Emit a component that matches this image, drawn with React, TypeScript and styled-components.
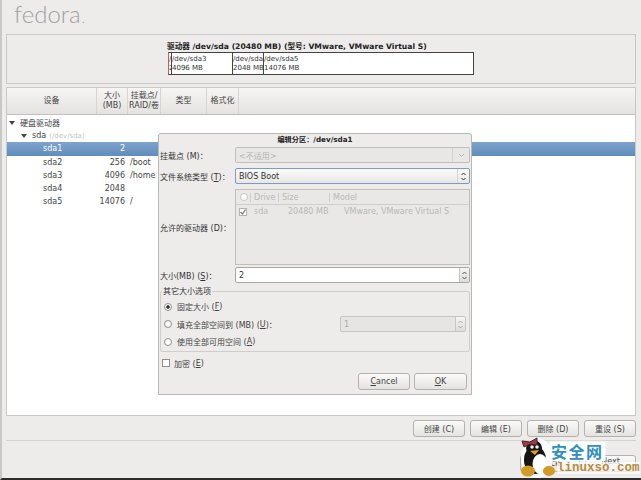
import React from 'react';
import styled, { createGlobalStyle } from 'styled-components';

const GlobalStyle = createGlobalStyle`
  html, body {
    margin: 0;
    padding: 0;
    background: #edeceb;
  }
`;

const Screen = styled.div`
  position: relative;
  width: 641px;
  height: 480px;
  overflow: hidden;
  display: flex;
  flex-direction: column;
  box-sizing: border-box;
  padding: 0 5px 0 4px;
  background: #edeceb;
  color: #3a3a3a;
  font-family: 'Liberation Sans', 'DejaVu Sans', 'Noto Sans CJK SC', sans-serif;
  font-size: 9px;
  border-left: 2px solid #c9c8c4;
  border-bottom: 2px solid #2c2c2c;
`;

const Logo = styled.div`
  height: 34px;
  box-sizing: border-box;
  padding: 0 0 0 8px;
  font-family: 'Lato', 'Open Sans', sans-serif;
  font-size: 24px;
  font-weight: 300;
  line-height: 28px;
  color: #a0a0a0;
  span {
    font-size: 14px;
    margin-left: 1px;
  }
`;

const DiskPanel = styled.section`
  height: 50px;
  box-sizing: border-box;
  border: 1px solid #c9c8c5;
  display: flex;
  flex-direction: column;
  align-items: flex-start;
  padding: 7px 0 0 160px;
`;

const DiskTitle = styled.div`
  font-family: 'DejaVu Sans', 'Noto Sans CJK SC', sans-serif;
  font-size: 7.65px;
  font-weight: 700;
  line-height: 10px;
  color: #222;
  white-space: nowrap;
`;

const DiskBar = styled.div`
  display: flex;
  width: 306px;
  height: 23px;
  margin-left: 1px;
  box-sizing: border-box;
  border: 1px solid #444;
  border-left-color: #c85a5a;
  background: #fff;
`;

const DiskSlot = styled.div<{ $w: number }>`
  width: ${(p) => p.$w}px;
  flex: none;
  box-sizing: border-box;
  overflow: hidden;
  border-right: 1px solid #444;
  font-family: 'DejaVu Sans', sans-serif;
  font-size: 7px;
  line-height: 9px;
  padding-top: 2px;
  white-space: nowrap;
  color: #333;
  &:last-child {
    border-right: none;
  }
`;

const TreePanel = styled.section`
  margin-top: 3px;
  height: 329px;
  box-sizing: border-box;
  border: 1px solid #c9c8c5;
  background: #fff;
`;

const TreeHead = styled.div`
  display: flex;
  height: 26px;
  margin-bottom: 1px;
  border-bottom: 1px solid #c2c1bd;
  background: linear-gradient(#f6f5f4, #e4e3e0);
`;

const HeadCell = styled.div<{ $w: number }>`
  width: ${(p) => p.$w}px;
  flex: none;
  box-sizing: border-box;
  display: flex;
  align-items: center;
  justify-content: center;
  text-align: center;
  white-space: nowrap;
  line-height: 10px;
  font-family: 'DejaVu Sans', 'Noto Sans CJK SC', sans-serif;
  font-size: 8px;
  border-right: 1px solid #d6d5d2;
  color: #444;
`;

const TreeRow = styled.div<{ $selected?: boolean; $indent: number }>`
  display: flex;
  align-items: center;
  height: 13.2px;
  padding-left: ${(p) => p.$indent}px;
  font-family: 'DejaVu Sans', 'Noto Sans CJK SC', sans-serif;
  font-size: 8px;
  white-space: nowrap;
  background: ${(p) => (p.$selected ? 'linear-gradient(#7fa3cc, #5f8dbd)' : 'transparent')};
  color: ${(p) => (p.$selected ? '#fff' : '#444')};
`;

const Arrow = styled.i`
  width: 0;
  height: 0;
  margin-right: 5px;
  border-left: 3.5px solid transparent;
  border-right: 3.5px solid transparent;
  border-top: 4px solid #444;
`;

const Muted = styled.span`
  margin-left: 3px;
  color: #c4c4c4;
  font-size: 7px;
`;

const DevCell = styled.span`
  width: 46px;
`;

const SizeCell = styled.span`
  width: 36px;
  text-align: right;
`;

const MountCell = styled.span`
  margin-left: 5px;
`;

const ActionBar = styled.div`
  display: flex;
  justify-content: flex-end;
  gap: 5px;
  padding: 4px 0 0;
  height: 25px;
  box-sizing: border-box;
  border-bottom: 1px solid #d4d3d0;
`;

const Button = styled.button<{ $w: number; $lift?: boolean }>`
  width: ${(p) => p.$w}px;
  height: 17px;
  padding: 0 0 ${(p) => (p.$lift ? 4 : 0)}px;
  box-sizing: border-box;
  border: 1px solid #b3b2ae;
  border-radius: 3px;
  background: linear-gradient(#fafaf9, #e4e3e0);
  font-family: 'DejaVu Sans', 'Noto Sans CJK SC', sans-serif;
  font-size: 8px;
  color: #444;
`;

const Footer = styled.div`
  display: flex;
  justify-content: flex-end;
  gap: 5px;
  padding-top: 14px;
`;

const Dialog = styled.div`
  position: absolute;
  left: 156px;
  top: 133px;
  width: 314px;
  height: 262px;
  box-sizing: border-box;
  border: 1px solid #b9b8b4;
  border-radius: 3px 3px 0 0;
  background: #edeceb;
  padding: 0 1px;
  font-family: 'DejaVu Sans', 'Noto Sans CJK SC', sans-serif;
  font-size: 8px;
  color: #444;
`;

const DialogTitle = styled.div`
  height: 13px;
  line-height: 12px;
  text-align: center;
  font-weight: 700;
  font-size: 7.2px;
  color: #222;
`;

const FormRow = styled.div<{ $h: number }>`
  display: flex;
  align-items: center;
  height: ${(p) => p.$h}px;
`;

const FormLabel = styled.div`
  width: 75px;
  flex: none;
  white-space: nowrap;
  color: #333;
`;

const Combo = styled.div<{ $disabled?: boolean; $focus?: boolean }>`
  flex: 1;
  height: 16px;
  box-sizing: border-box;
  display: flex;
  align-items: center;
  justify-content: space-between;
  padding: 0 0 0 3px;
  border: 1px solid ${(p) => (p.$focus ? '#7b9cc4' : '#c0bfbb')};
  border-radius: 2px;
  background: ${(p) => (p.$disabled ? '#e8e7e5' : 'linear-gradient(#fbfbfa, #e8e7e4)')};
  color: ${(p) => (p.$disabled ? '#b4b4b2' : '#333')};
`;

const ComboSide = styled.span<{ $w: number }>`
  width: ${(p) => p.$w}px;
  height: 100%;
  display: flex;
  align-items: center;
  justify-content: center;
  border-left: 1px solid #d4d3d0;
`;

const DriveTable = styled.div`
  flex: 1;
  height: 76px;
  box-sizing: border-box;
  border: 1px solid #c0bfbb;
  background: #e9e8e6;
  color: #b8b8b6;
`;

const DriveHead = styled.div`
  display: flex;
  align-items: center;
  height: 14px;
  border-bottom: 1px solid #cfcecb;
  padding-left: 4px;
`;

const DriveHeadCell = styled.span<{ $w: number }>`
  width: ${(p) => p.$w}px;
  flex: none;
  box-sizing: border-box;
  padding-left: 3px;
  border-left: 1px solid #cfcecb;
  white-space: nowrap;
`;

const DriveCol = styled.span<{ $w: number }>`
  width: ${(p) => p.$w}px;
  flex: none;
  white-space: nowrap;
`;

const DriveLine = styled.div`
  display: flex;
  align-items: center;
  height: 13px;
  padding-left: 3px;
`;

const RadioMark = styled.span<{ $on?: boolean; $dim?: boolean }>`
  width: 8px;
  height: 8px;
  box-sizing: border-box;
  flex: none;
  border-radius: 50%;
  border: 1px solid ${(p) => (p.$dim ? '#c4c4c2' : '#8e8d89')};
  background: ${(p) => (p.$on ? 'radial-gradient(#333 35%, #fff 45%)' : '#fff')};
  margin-right: ${(p) => (p.$dim ? 2 : 5)}px;
`;

const CheckMark = styled.span<{ $dim?: boolean }>`
  width: 8px;
  height: 8px;
  box-sizing: border-box;
  flex: none;
  border: 1px solid ${(p) => (p.$dim ? '#b4b4b2' : '#8e8d89')};
  background: #fff;
  margin-right: ${(p) => (p.$dim ? 7 : 4)}px;
  display: flex;
  align-items: center;
  justify-content: center;
`;

const Spin = styled.div<{ $w?: number; $disabled?: boolean }>`
  flex: ${(p) => (p.$w ? 'none' : '1')};
  width: ${(p) => (p.$w ? `${p.$w}px` : 'auto')};
  height: 16px;
  box-sizing: border-box;
  display: flex;
  align-items: center;
  justify-content: space-between;
  padding-left: 3px;
  border: 1px solid ${(p) => (p.$disabled ? '#c6c5c2' : '#a8a7a3')};
  border-radius: 2px;
  background: ${(p) => (p.$disabled ? '#e6e5e3' : '#fff')};
  color: ${(p) => (p.$disabled ? '#aaa' : '#333')};
`;

const SpinSide = styled.span`
  width: 9px;
  height: 100%;
  display: flex;
  align-items: center;
  justify-content: center;
  background: linear-gradient(#f5f4f3, #dddcd9);
  border-left: 1px solid #c6c5c2;
`;

const OptionGroup = styled.fieldset`
  margin: 2px 0 0;
  padding: 2px 3px 0 3px;
  height: 65px;
  box-sizing: border-box;
  border: 1px solid #cfcecb;
  border-radius: 2px;
`;

const GroupLegend = styled.legend`
  padding: 0 1px;
  margin-left: -2px;
  font-size: 8px;
  line-height: 9px;
  color: #333;
`;

const OptionRow = styled.div`
  display: flex;
  align-items: center;
  height: 17.5px;
  color: #444;
`;

const OptionFill = styled.span`
  flex: 1;
`;

const EncryptRow = styled.div`
  display: flex;
  align-items: center;
  height: 20px;
  margin-top: 1px;
  padding-left: 2px;
`;

const DialogActions = styled.div`
  display: flex;
  justify-content: flex-end;
  gap: 4px;
  padding-right: 3px;
`;

const Watermark = styled.div`
  position: absolute;
  left: 518px;
  top: 435px;
  width: 121px;
  height: 43px;
`;

const Penguin = styled.svg`
  position: absolute;
  left: 0;
  top: 0;
`;

const WaterTitle = styled.div`
  position: absolute;
  left: 30px;
  top: 7px;
  height: 19px;
  padding: 0 1px;
  background: #fff;
  box-shadow: 0 0 3px #fff;
  font-family: 'Noto Sans CJK SC', sans-serif;
  font-size: 16px;
  line-height: 19px;
  font-weight: 700;
  letter-spacing: 1.5px;
  color: #2e8fc2;
  white-space: nowrap;
`;

const WaterSite = styled.div`
  position: absolute;
  left: 37px;
  top: 27px;
  height: 12px;
  background: rgba(255, 255, 255, 0.7);
  font-family: 'Liberation Mono', monospace;
  font-size: 12.5px;
  line-height: 12px;
  font-weight: 700;
  color: #b98a3e;
  white-space: nowrap;
`;

const partitions = [
  { name: 'sda1', size: '2', mount: '', selected: true },
  { name: 'sda2', size: '256', mount: '/boot' },
  { name: 'sda3', size: '4096', mount: '/home' },
  { name: 'sda4', size: '2048', mount: '' },
  { name: 'sda5', size: '14076', mount: '/' },
];

const UpDown = ({ color = '#555' }: { color?: string }) => (
  <svg width="7" height="11" viewBox="0 0 7 11">
    <path d="M1.5 4 3.5 2 5.5 4M1.5 7 3.5 9 5.5 7" fill="none" stroke={color} strokeWidth="1" />
  </svg>
);

export default function App() {
  return (
    <Screen>
      <GlobalStyle />
      <Logo>
        fedora<span>.</span>
      </Logo>
      <DiskPanel>
        <DiskTitle>驱动器 /dev/sda (20480 MB) (型号: VMware, VMware Virtual S)</DiskTitle>
        <DiskBar>
          <DiskSlot $w={3}>
            /<br />2
          </DiskSlot>
          <DiskSlot $w={61}>
            /dev/sda3<br />4096 MB
          </DiskSlot>
          <DiskSlot $w={31}>
            /dev/sda4<br />2048 MB
          </DiskSlot>
          <DiskSlot $w={209}>
            /dev/sda5<br />14076 MB
          </DiskSlot>
        </DiskBar>
      </DiskPanel>
      <TreePanel>
        <TreeHead>
          <HeadCell $w={90}>设备</HeadCell>
          <HeadCell $w={31}>大小<br />(MB)</HeadCell>
          <HeadCell $w={33}>挂载点/<br />RAID/卷</HeadCell>
          <HeadCell $w={46}>类型</HeadCell>
          <HeadCell $w={32}>格式化</HeadCell>
        </TreeHead>
        <TreeRow $indent={2}>
          <Arrow />硬盘驱动器
        </TreeRow>
        <TreeRow $indent={14}>
          <Arrow />sda<Muted>(/dev/sda)</Muted>
        </TreeRow>
        {partitions.map((row) => (
          <TreeRow key={row.name} $indent={36} $selected={row.selected}>
            <DevCell>{row.name}</DevCell>
            <SizeCell>{row.size}</SizeCell>
            <MountCell>{row.mount}</MountCell>
          </TreeRow>
        ))}
      </TreePanel>
      <ActionBar>
        <Button $w={52}>创建 (C)</Button>
        <Button $w={52}>编辑 (E)</Button>
        <Button $w={52}>删除 (D)</Button>
        <Button $w={52}>重设 (S)</Button>
      </ActionBar>
      <Footer>
        <Button $w={60}>Back</Button>
        <Button $w={51} $lift>Next</Button>
      </Footer>

      <Dialog>
        <DialogTitle>编辑分区：/dev/sda1</DialogTitle>
        <FormRow $h={16}>
          <FormLabel>挂载点 (M)：</FormLabel>
          <Combo $disabled>
            &lt;不适用&gt;
            <ComboSide $w={16}>
              <svg width="7" height="5" viewBox="0 0 7 5">
                <path d="M1 1 3.5 3.5 6 1" fill="none" stroke="#b5b5b3" />
              </svg>
            </ComboSide>
          </Combo>
        </FormRow>
        <FormRow $h={26}>
          <FormLabel>文件系统类型 (<u>T</u>)：</FormLabel>
          <Combo $focus>
            BIOS Boot
            <ComboSide $w={11}>
              <UpDown color="#333" />
            </ComboSide>
          </Combo>
        </FormRow>
        <FormRow $h={76}>
          <FormLabel>允许的驱动器 (D)：</FormLabel>
          <DriveTable>
            <DriveHead>
              <RadioMark $dim />
              <DriveHeadCell $w={28}>Drive</DriveHeadCell>
              <DriveHeadCell $w={51}>Size</DriveHeadCell>
              <DriveHeadCell $w={30}>Model</DriveHeadCell>
            </DriveHead>
            <DriveLine>
              <CheckMark $dim>
                <svg width="6" height="6" viewBox="0 0 6 6">
                  <path d="M0.5 3 2.5 5 5.5 0.5" fill="none" stroke="#777" strokeWidth="1.2" />
                </svg>
              </CheckMark>
              <DriveCol $w={34}>sda</DriveCol>
              <DriveCol $w={56}>20480 MB</DriveCol>
              <DriveCol $w={100}>VMware, VMware Virtual S</DriveCol>
            </DriveLine>
          </DriveTable>
        </FormRow>
        <FormRow $h={20}>
          <FormLabel>大小(MB) (<u>S</u>)：</FormLabel>
          <Spin>
            2
            <SpinSide>
              <UpDown />
            </SpinSide>
          </Spin>
        </FormRow>
        <OptionGroup>
          <GroupLegend>其它大小选项</GroupLegend>
          <OptionRow>
            <RadioMark $on />固定大小 (<u>F</u>)
          </OptionRow>
          <OptionRow>
            <RadioMark />填充全部空间到 (MB) (<u>U</u>)：
            <OptionFill />
            <Spin $w={126} $disabled>
              1
              <SpinSide>
                <UpDown color="#aaa" />
              </SpinSide>
            </Spin>
          </OptionRow>
          <OptionRow>
            <RadioMark />使用全部可用空间 (<u>A</u>)
          </OptionRow>
        </OptionGroup>
        <EncryptRow>
          <CheckMark />加密 (<u>E</u>)
        </EncryptRow>
        <DialogActions>
          <Button $w={52}><u>C</u>ancel</Button>
          <Button $w={53}><u>O</u>K</Button>
        </DialogActions>
      </Dialog>

      <Watermark>
        <Penguin width="36" height="43" viewBox="0 0 36 43">
          <ellipse cx="17" cy="23" rx="16" ry="20" fill="#fff" opacity="0.9" />
          <ellipse cx="15" cy="25" rx="11" ry="14" fill="#151515" />
          <ellipse cx="14" cy="13" rx="8" ry="7.5" fill="#151515" />
          <path d="M2 6 10 7 17 3 17 10 10 9 4 12Z" fill="#9c3c44" stroke="#5a1f26" strokeWidth="1" />
          <ellipse cx="20" cy="29" rx="7.5" ry="10" fill="#fff" />
          <circle cx="12" cy="12" r="1.8" fill="#eee" />
          <circle cx="17" cy="12" r="1.8" fill="#eee" />
          <path d="M10 16 19 15 15 20Z" fill="#d9a02c" />
          <ellipse cx="8" cy="36" rx="7" ry="5.5" fill="#d49a26" />
          <ellipse cx="29" cy="36" rx="6" ry="5" fill="#d49a26" />
        </Penguin>
        <WaterTitle>安全网</WaterTitle>
        <WaterSite>linuxso.com</WaterSite>
      </Watermark>
    </Screen>
  );
}
